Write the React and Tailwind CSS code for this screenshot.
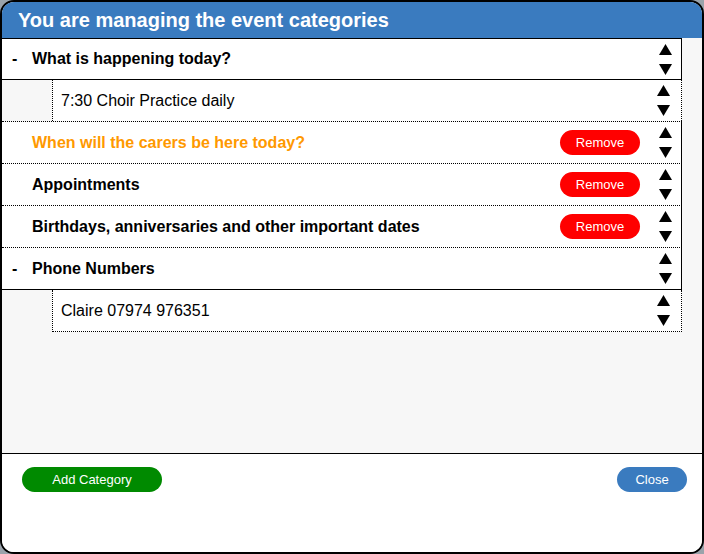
import React from 'react'

const font = { fontFamily: '"Liberation Sans", Arial, sans-serif' }

function Arrows() {
  return (
    <div className="flex flex-col items-center gap-[9px] w-[13px] shrink-0">
      <svg width="13" height="11" viewBox="0 0 13 11">
        <polygon points="6.5,0 13,11 0,11" fill="#000" />
      </svg>
      <svg width="13" height="11" viewBox="0 0 13 11">
        <polygon points="0,0 13,0 6.5,11" fill="#000" />
      </svg>
    </div>
  )
}

function RemoveButton() {
  return (
    <button className="w-[80px] h-[25px] rounded-full bg-[#ff0000] text-white text-[13px] leading-none mr-[19px]">
      Remove
    </button>
  )
}

function CategoryRow({ label, open, removable, highlight, solidBottom, top }) {
  return (
    <div
      className={
        'h-[42px] flex items-center bg-white border-r border-black ' +
        (solidBottom ? 'border-b border-solid ' : 'border-b border-dotted ') +
        (top ? 'border-t border-t-black border-dotted ' : '')
      }
      style={{ borderRightStyle: 'solid' }}
    >
      <div className="w-[30px] pl-[10px] text-[16px] font-bold">{open ? '-' : ''}</div>
      <div className={'flex-1 text-[16px] font-bold ' + (highlight ? 'text-[#ff9900]' : 'text-black')}>
        {label}
      </div>
      {removable && <RemoveButton />}
      <div className="pr-[9px]">
        <Arrows />
      </div>
    </div>
  )
}

function ItemRow({ label, fullLine }) {
  return (
    <div className={'flex h-[42px] ' + (fullLine ? 'border-b border-dotted border-black' : '')}>
      <div className="w-[50px] shrink-0" />
      <div
        className={
          'flex-1 flex items-center bg-white border-l border-r border-dotted border-black ' +
          (fullLine ? '' : 'border-b')
        }
      >
        <div className="flex-1 pl-[8px] text-[16px] text-black">{label}</div>
        <div className="pr-[11px]">
          <Arrows />
        </div>
      </div>
    </div>
  )
}

export default function App() {
  return (
    <div className="w-[704px] h-[554px] bg-[#9aa3ab]" style={font}>
      <div className="w-full h-full border-2 border-black rounded-[14px] overflow-hidden flex flex-col bg-white">
        <div className="h-[36px] bg-[#3a7bbf] flex items-center pl-[16px] shrink-0">
          <h1 className="text-white text-[20px] font-bold">You are managing the event categories</h1>
        </div>
        <div className="flex-1 bg-[#f7f7f7] border-b border-black">
          <div className="w-[680px]">
            <CategoryRow label="What is happening today?" open solidBottom top />
            <ItemRow label="7:30 Choir Practice daily" fullLine />
            <CategoryRow label="When will the carers be here today?" removable highlight />
            <CategoryRow label="Appointments" removable />
            <CategoryRow label="Birthdays, anniversaries and other important dates" removable />
            <CategoryRow label="Phone Numbers" open solidBottom />
            <ItemRow label="Claire 07974 976351" />
          </div>
        </div>
        <div className="h-[98px] shrink-0 bg-white flex items-start justify-between pt-[13px] pl-[20px] pr-[15px]">
          <button className="w-[140px] h-[25px] rounded-full bg-[#008a00] text-white text-[13px] leading-none">
            Add Category
          </button>
          <button className="w-[70px] h-[25px] rounded-full bg-[#3a7bbf] text-white text-[13px] leading-none">
            Close
          </button>
        </div>
      </div>
    </div>
  )
}
